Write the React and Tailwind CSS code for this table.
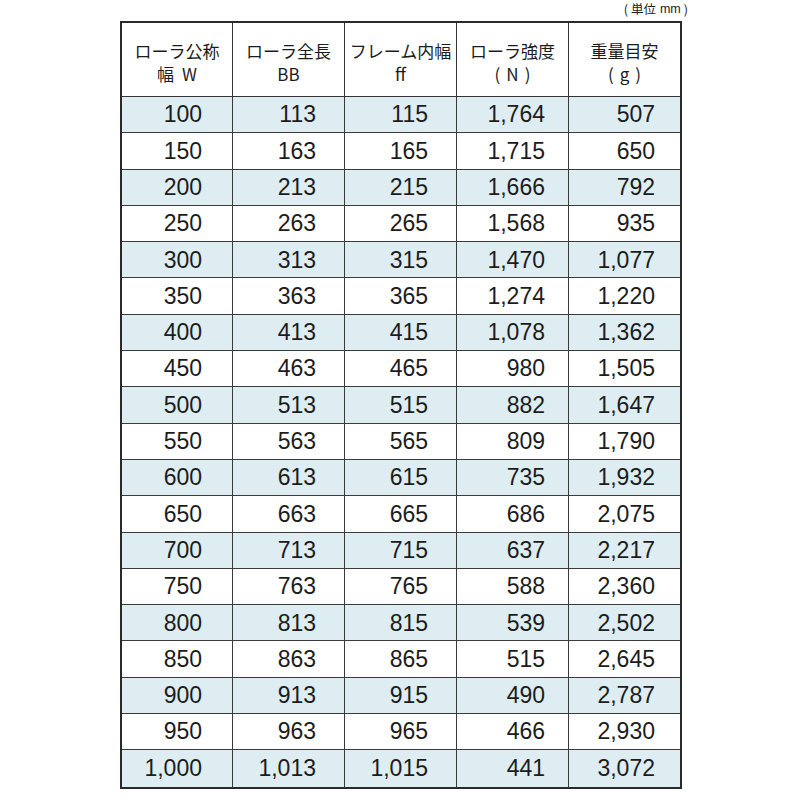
import React from "react";

const rows = [
  ["100", "113", "115", "1,764", "507"],
  ["150", "163", "165", "1,715", "650"],
  ["200", "213", "215", "1,666", "792"],
  ["250", "263", "265", "1,568", "935"],
  ["300", "313", "315", "1,470", "1,077"],
  ["350", "363", "365", "1,274", "1,220"],
  ["400", "413", "415", "1,078", "1,362"],
  ["450", "463", "465", "980", "1,505"],
  ["500", "513", "515", "882", "1,647"],
  ["550", "563", "565", "809", "1,790"],
  ["600", "613", "615", "735", "1,932"],
  ["650", "663", "665", "686", "2,075"],
  ["700", "713", "715", "637", "2,217"],
  ["750", "763", "765", "588", "2,360"],
  ["800", "813", "815", "539", "2,502"],
  ["850", "863", "865", "515", "2,645"],
  ["900", "913", "915", "490", "2,787"],
  ["950", "963", "965", "466", "2,930"],
  ["1,000", "1,013", "1,015", "441", "3,072"],
];

const Paren = ({ children }) => (
  <span className="flex items-center">
    <span className="mr-[6px]">(</span>
    <span>{children}</span>
    <span className="ml-[6px]">)</span>
  </span>
);

const headers = [
  ["ローラ公称", <>幅<span className="ml-[8px]">W</span></>],
  ["ローラ全長", "BB"],
  ["フレーム内幅", "ff"],
  ["ローラ強度", <Paren>N</Paren>],
  ["重量目安", <Paren>g</Paren>],
];

const colW = ["w-[111px] border-r", "w-[112px] border-r", "w-[112px] border-r", "w-[112px] border-r", "w-[111px]"];
const colPad = ["pr-[30px]", "pr-[28px]", "pr-[28px]", "pr-[23px]", "pr-[25px]"];

const jp = { fontFamily: '"Noto Sans CJK JP", sans-serif' };

export default function App() {
  return (
    <div className="w-[800px] h-[800px] bg-white pl-[120px] text-[#1c1c1c]">
      <div className="w-[568px] h-[21px] flex justify-end items-start pt-[1px] text-[12.5px] leading-[16px]" style={jp}>
        <span className="mr-[3px]">(</span>
        <span>単位</span>
        <span className="ml-[4px]" style={{ fontFamily: '"Liberation Sans", Arial, sans-serif' }}>mm</span>
        <span className="ml-[3px]">)</span>
      </div>
      <div className="w-[562px] border-2 border-[#2a2a2a]">
        <div className="flex h-[74px] border-b border-[#333]">
          {headers.map((h, i) => (
            <div
              key={i}
              className={`${colW[i]} border-[#333] flex flex-col items-center pt-[16px] text-[17px] leading-[23px]`}
              style={jp}
            >
              <div>{h[0]}</div>
              <div>{h[1]}</div>
            </div>
          ))}
        </div>
        {rows.map((r, ri) => (
          <div
            key={ri}
            className={`flex h-[36.3px] ${ri < rows.length - 1 ? "border-b border-[#3a3a3a]" : ""} ${ri % 2 === 0 ? "bg-[#ddedf1]" : "bg-white"}`}
          >
            {r.map((v, ci) => (
              <div
                key={ci}
                className={`${colW[ci]} ${colPad[ci]} border-[#3a3a3a] flex items-center justify-end text-[23px]`}
                style={{ fontFamily: '"Liberation Sans", Arial, sans-serif' }}
              >
                {v}
              </div>
            ))}
          </div>
        ))}
      </div>
    </div>
  );
}
